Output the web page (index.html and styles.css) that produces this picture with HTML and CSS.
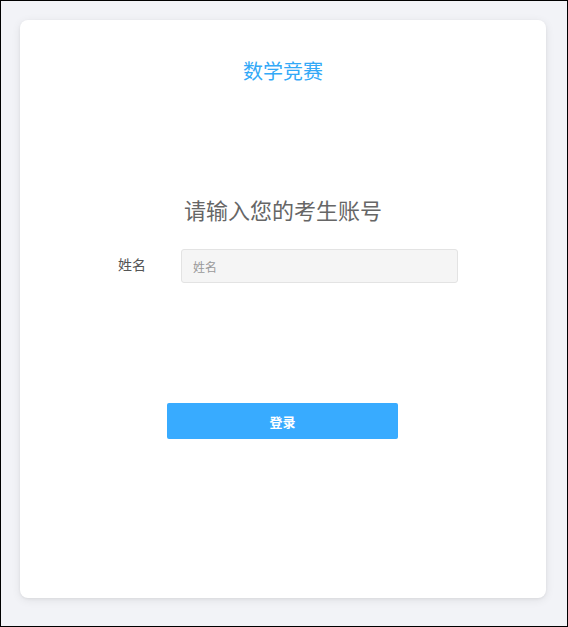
FILE: index.html
```html
<!DOCTYPE html>
<html lang="zh-CN">
<head>
<meta charset="utf-8">
<title>数学竞赛</title>
<link rel="stylesheet" href="styles.css">
</head>
<body>
<div class="frame">
  <div class="card">
    <div class="brand">数学竞赛</div>
    <h1 class="heading">请输入您的考生账号</h1>
    <div class="row">
      <label class="label" for="name">姓名</label>
      <input class="input" id="name" type="text" placeholder="姓名">
    </div>
    <button class="btn" type="button">登录</button>
  </div>
</div>
</body>
</html>
```
FILE: styles.css
```css
* { box-sizing: border-box; }
html, body { margin: 0; padding: 0; }
body {
  font-family: "Noto Sans CJK SC", "Noto Sans", sans-serif;
  background: #f2f3f7;
}
.frame {
  width: 568px;
  height: 627px;
  border: 1px solid #000;
  padding: 19px 21px 28px 19px;
  display: flex;
  background: #f2f3f7;
}
.card {
  flex: 1;
  background: #fff;
  border-radius: 8px;
  box-shadow: 0 2px 10px rgba(0, 0, 0, 0.08), 0 1px 3px rgba(0, 0, 0, 0.06);
  display: flex;
  flex-direction: column;
  align-items: center;
  padding-top: 37px;
}
.brand {
  font-size: 20px;
  line-height: 28px;
  color: #33a9f7;
}
.heading {
  margin: 109px 0 0;
  font-size: 22px;
  line-height: 30px;
  font-weight: 400;
  color: #666;
}
.row {
  align-self: flex-start;
  margin: 25px 0 0 98px;
  display: flex;
  align-items: center;
}
.label {
  width: 63px;
  font-size: 14px;
  color: #555;
  position: relative;
  top: -2px;
}
.input {
  width: 277px;
  height: 34px;
  border: 1px solid #e3e3e3;
  border-radius: 3px;
  background: #f5f5f5;
  padding: 0 11px;
  font-family: inherit;
  font-size: 12px;
  color: #333;
  outline: none;
}
.input::placeholder { color: #999; }
.btn {
  align-self: flex-start;
  margin: 120px 0 0 147px;
  width: 231px;
  height: 36px;
  border: none;
  border-radius: 2px;
  background: #38abff;
  color: #fff;
  font-family: inherit;
  font-size: 13px;
  font-weight: 700;
  cursor: pointer;
}
```
